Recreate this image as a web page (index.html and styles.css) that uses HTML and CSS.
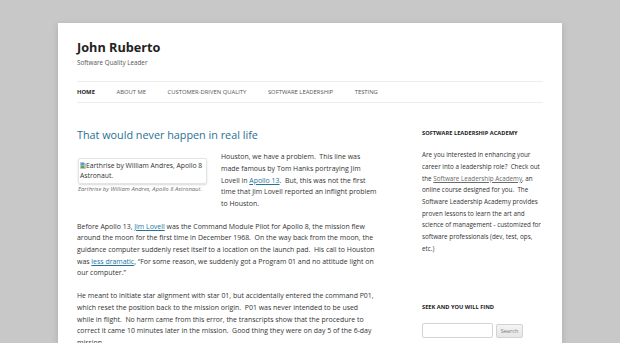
FILE: index.html
```html
<!DOCTYPE html>
<html>
<head>
    <title>John Ruberto | Software Quality Leader</title>
    <link rel="stylesheet" href="styles.css">
</head>
<body>
    <div class="site">
        <header class="site-header">
            <h1 class="site-title"><a href="#">John Ruberto</a></h1>
            <h2 class="site-description">Software Quality Leader</h2>
            <nav class="main-nav">
                <ul>
                    <li class="current"><a href="#">Home</a></li>
                    <li><a href="#">About Me</a></li>
                    <li><a href="#">Customer-Driven Quality</a></li>
                    <li><a href="#">Software Leadership</a></li>
                    <li><a href="#">Testing</a></li>
                </ul>
            </nav>
        </header>

        <div class="site-main">
            <div class="content">
                <article class="post">
                    <h1 class="entry-title"><a href="#">That would never happen in real life</a></h1>
                    <div class="entry-content">
                        <figure class="wp-caption">
                            <div class="img-alt">
                                <svg class="broken-icon" width="6" height="7" viewBox="0 0 6 7">
                                    <path d="M0.5 0.5h3.5l1.5 1.5v4.5h-5z" fill="#fff" stroke="#9a9a9a" stroke-width="0.6"/>
                                    <rect x="1" y="1" width="3.6" height="2.6" fill="#5b9bd8"/>
                                    <path d="M1 6V4.4l1.4-1 1.2 0.8 1-0.6V6z" fill="#4caa3c"/>
                                </svg>Earthrise by William Andres, Apollo 8 Astronaut.
                            </div>
                            <figcaption>Earthrise by William Andres, Apollo 8 Astronaut.</figcaption>
                        </figure>
                        <p>Houston, we have a problem.&nbsp; This line was made famous by Tom Hanks portraying Jim Lovell in <a href="#">Apollo 13</a>.&nbsp; But, this was not the first time that Jim Lovell reported an inflight problem to Houston.</p>
                        <p>Before Apollo 13, <a href="#">Jim Lovell</a> was the Command Module Pilot for Apollo 8, the mission flew around the moon for the first time in December 1968.&nbsp; On the way back from the moon, the guidance computer suddenly reset itself to a location on the launch pad.&nbsp; His call to Houston was <a href="#">less dramatic</a>, &ldquo;For some reason, we suddenly got a Program 01 and no attitude light on our computer.&rdquo;</p>
                        <p>He meant to initiate star alignment with star 01, but accidentally entered the command P01, which reset the position back to the mission origin.&nbsp; P01 was never intended to be used<br>
                        while in flight.&nbsp; No harm came from this error, the transcripts show that the procedure to correct it came 10 minutes later in the mission.&nbsp; Good thing they were on day 5 of the 6-day mission.</p>
                    </div>
                </article>
            </div>

            <aside class="sidebar">
                <div class="widget">
                    <h3 class="widget-title">Software Leadership Academy</h3>
                    <p>Are you interested in enhancing your career into a leadership role?&nbsp; Check out the <a href="#">Software Leadership Academy</a>, an online course designed for you.&nbsp; The Software Leadership Academy provides proven lessons to learn the art and science of management - customized for software professionals (dev, test, ops, etc.)</p>
                </div>
                <div class="widget">
                    <h3 class="widget-title">Seek and you will find</h3>
                    <form class="search-form">
                        <input type="text" class="search-field">
                        <button type="button" class="search-submit">Search</button>
                    </form>
                </div>
            </aside>
        </div>
    </div>
</body>
</html>
```

FILE: styles.css
```css
html {
    overflow: hidden;
}

body {
    margin: 0;
    background-color: #c8c8c8;
    font-family: "Open Sans", "Liberation Sans", sans-serif;
    color: #333;
}

a {
    color: #21759b;
}

.site {
    width: 466px;
    margin: 23px auto 0;
    padding: 0 19px 40px;
    background-color: #fff;
    box-shadow: 0 2px 6px rgba(100, 100, 100, 0.3);
}

/* header */
.site-header {
    padding-top: 16px;
}

.site-title {
    margin: 0;
    font-size: 12.7px;
    line-height: 16.7px;
    font-weight: bold;
}

.site-title a {
    color: #222;
    text-decoration: none;
}

.site-description {
    margin: 2.5px 0 0;
    font-size: 6.3px;
    line-height: 10px;
    font-weight: normal;
    color: #555;
}

.main-nav {
    margin-top: 13px;
    border-top: 1px solid #ededed;
    border-bottom: 1px solid #ededed;
}

.main-nav ul {
    display: flex;
    margin: 0;
    padding: 0;
    list-style: none;
}

.main-nav li {
    margin-right: 21.6px;
    font-size: 5.85px;
    line-height: 20px;
    text-transform: uppercase;
}

.main-nav a {
    color: #555;
    text-decoration: none;
}

.main-nav .current a {
    color: #222;
    font-weight: bold;
}

/* main */
.site-main {
    display: flex;
    justify-content: space-between;
    padding-top: 24.5px;
}

.content {
    width: 303px;
}

.entry-title {
    margin: 0 0 10.5px;
    font-size: 10.8px;
    line-height: 13px;
    font-weight: normal;
}

.entry-title a {
    color: #1f6f95;
    text-decoration: none;
}

.entry-content {
    font-size: 6.95px;
    line-height: 11.67px;
}

.entry-content p {
    margin: 0 0 11.2px;
}

.wp-caption {
    float: left;
    margin: 7px 14px 4px 1px;
    width: 129px;
}

.img-alt {
    height: 21px;
    padding: 2px 1px 1px;
    border: 1px solid #e4e4e4;
    border-radius: 2px;
    box-shadow: 0 1px 2px rgba(0, 0, 0, 0.15);
    font-size: 6.8px;
    line-height: 10px;
}

.broken-icon {
    vertical-align: -1px;
}

.wp-caption figcaption {
    font-size: 5.9px;
    line-height: 9px;
    font-style: italic;
    color: #6a6a6a;
    padding-top: 1px;
}

/* sidebar */
.sidebar {
    width: 121px;
}

.widget {
    margin-bottom: 47.5px;
}

.widget-title {
    margin: 0 0 11.6px;
    font-size: 5.7px;
    line-height: 10px;
    font-weight: bold;
    text-transform: uppercase;
    color: #222;
}

.widget p {
    margin: 0;
    font-size: 6.3px;
    line-height: 11.67px;
}

.widget p a {
    color: #6a6a6a;
}

.search-form {
    display: flex;
    gap: 3px;
    margin-top: 3px;
}

.search-field {
    width: 71px;
    height: 14.5px;
    box-sizing: border-box;
    padding: 0 3px;
    border: 1px solid #d4d4d4;
    border-radius: 2px;
    font-size: 7px;
}

.search-submit {
    width: 27px;
    height: 13.5px;
    margin-top: 1px;
    padding: 0;
    border: 1px solid #d2d2d2;
    border-radius: 2px;
    background: linear-gradient(#f4f4f4, #e6e6e6);
    font-family: "Open Sans", "Liberation Sans", sans-serif;
    font-size: 5.6px;
    color: #7c7c7c;
}
```
